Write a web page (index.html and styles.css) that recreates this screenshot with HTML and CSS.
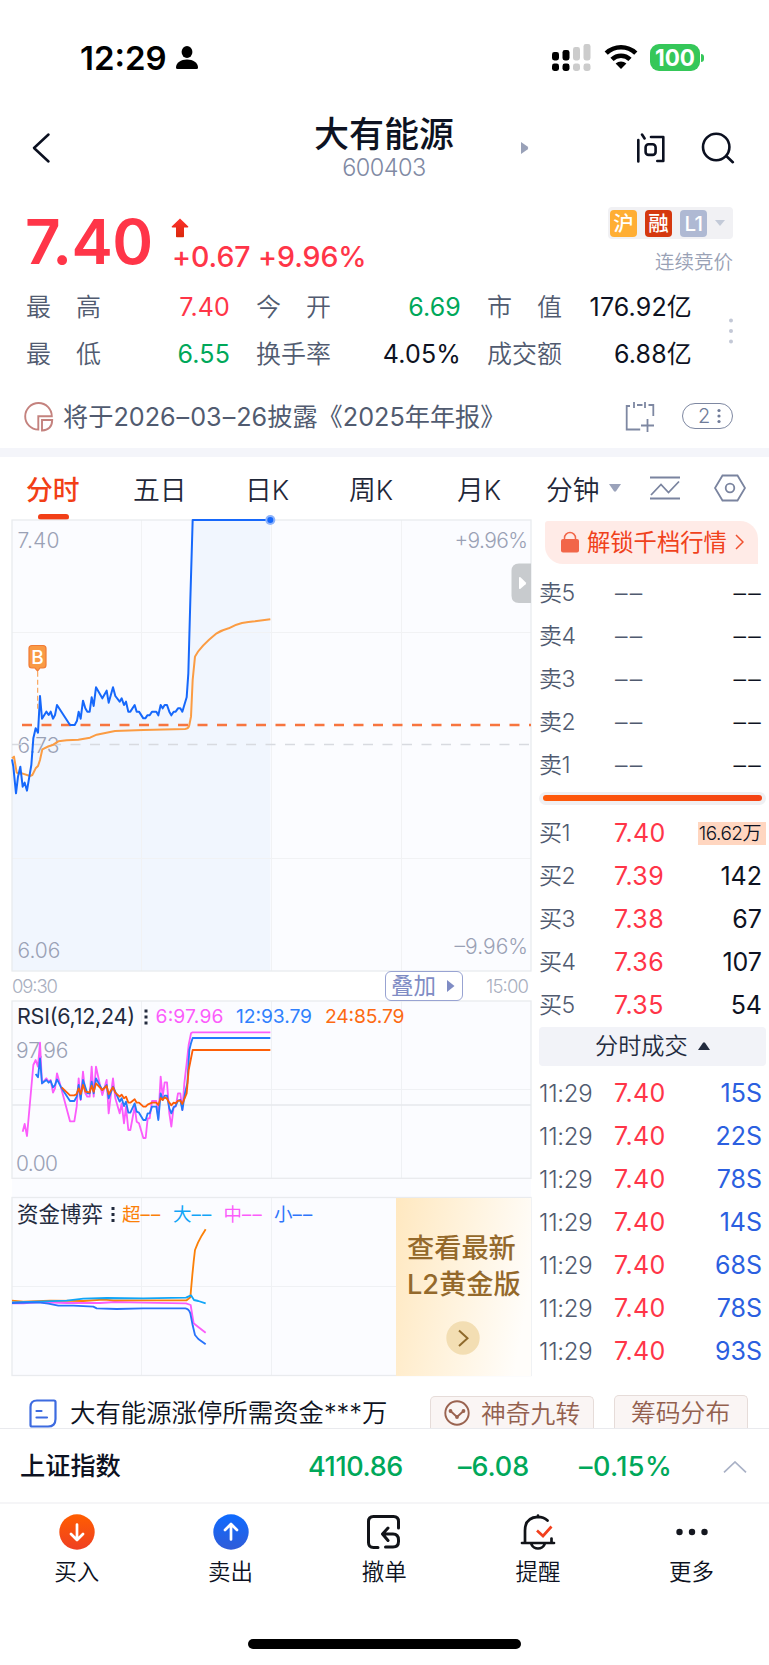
FILE: index.html
```html
<!DOCTYPE html>
<html lang="zh-CN">
<head>
<meta charset="utf-8">
<title>大有能源 600403</title>
<link rel="stylesheet" href="styles.css">
</head>
<body>
<div class="status">
  <span class="clock">12:29</span>
  <svg class="person" width="24" height="26" viewBox="0 0 24 26"><ellipse cx="12" cy="7" rx="5.4" ry="6"/><path d="M1 22.5C1 17.5 6 14.5 12 14.5s11 3 11 8q0 1.5-1.5 1.5h-19Q1 24 1 22.5Z"/></svg>
  <svg class="signal" width="39" height="28" viewBox="0 0 39 28"><g fill="#000"><rect x="0" y="8" width="7" height="8.5" rx="2.4"/><rect x="0" y="19.5" width="7" height="7.5" rx="2.4"/><rect x="10.5" y="6" width="7" height="10.5" rx="2.4"/><rect x="10.5" y="19.5" width="7" height="7.5" rx="2.4"/></g><g fill="#ccc"><rect x="21" y="3" width="7" height="13.5" rx="2.4"/><rect x="21" y="19.5" width="7" height="7.5" rx="2.4"/><rect x="31.5" y="0" width="7" height="16.5" rx="2.4"/><rect x="31.5" y="19.5" width="7" height="7.5" rx="2.4"/></g></svg>
  <svg class="wifi" width="34" height="26" viewBox="0 0 34 26"><path d="M2.2 9.2a21.5 21.5 0 0 1 29.6 0M8 15.4a13 13 0 0 1 18 0" fill="none" stroke="#000" stroke-width="4.6"/><path d="M11.6 19.6a8 8 0 0 1 10.8 0L17 25Z"/></svg>
  <span class="battery">100</span><i class="nub"></i>
</div>

<header class="header">
  <svg class="back" width="20" height="32" viewBox="0 0 20 32"><path d="M17.5 2.5 3 16l14.500 13.5" fill="none" stroke="#0b1020" stroke-width="2.5" stroke-linecap="round" stroke-linejoin="round"/></svg>
  <div class="title"><h1>大有能源</h1><span>600403</span></div>
  <svg class="next" width="8" height="12" viewBox="0 0 8 12"><path d="M0 0 6.5 4.5q1.5 1.5 0 3L0 12Z" fill="#99a1b8"/></svg>
  <svg class="ask" width="30" height="32" viewBox="0 0 30 32"><g fill="none" stroke="#0b1020" stroke-width="2.6" stroke-linecap="round" stroke-linejoin="round"><path d="M2.3 8v21.5M6 2.5l2.6 4M15 5h12.3v24h-6"/><rect x="9.6" y="12.3" width="10" height="10.6" rx="3"/></g></svg>
  <svg class="search" width="34" height="32" viewBox="0 0 34 32"><g fill="none" stroke="#0b1020" stroke-width="2.6" stroke-linecap="round"><circle cx="15.2" cy="15" r="13.2"/><path d="m25.3 24 6.5 6.2"/></g></svg>
</header>

<section class="quote">
  <strong class="price">7.40</strong>
  <div class="change">
    <svg width="18" height="21" viewBox="0 0 18 21"><defs><linearGradient id="up" x2="0" y2="1"><stop stop-color="#ff302c"/><stop offset="1" stop-color="#d9280b"/></linearGradient></defs><path d="M9 .5 17.3 8.5q.3 1-.8 1H13V18.500q0 .8-.8.8H5.8q-.8 0-.8-.8V9.500H1.500q-1.100 0-.8-1Z" fill="url(#up)"/></svg>
    <span>+0.67 +9.96%</span>
  </div>
  <div class="market">
    <div class="badges"><b class="hu">沪</b><b class="rong">融</b><b class="l1">L1</b><i class="tri-down"></i></div>
    <span>连续竞价</span>
  </div>
</section>

<section class="stats">
  <span class="lab wide"><i>最</i><i>高</i></span><span class="val up">7.40</span>
  <span class="lab wide"><i>今</i><i>开</i></span><span class="val down">6.69</span>
  <span class="lab wide"><i>市</i><i>值</i></span><span class="val">176.92亿</span>
  <svg class="more" width="6" height="28" viewBox="0 0 6 28"><g fill="#c3c8d6"><circle cx="3" cy="3.500" r="2"/><circle cx="3" cy="14" r="2"/><circle cx="3" cy="24.500" r="2"/></g></svg>
  <span class="lab wide"><i>最</i><i>低</i></span><span class="val down">6.55</span>
  <span class="lab">换手率</span><span class="val">4.05%</span>
  <span class="lab">成交额</span><span class="val">6.88亿</span>
</section>

<section class="notice">
  <svg width="30" height="30" viewBox="0 0 30 30"><g fill="none" stroke="#c4827e" stroke-width="1.900"><path d="M14.300 27.600A13.300 13.300 0 1 1 27.800 14.300H14.300Z"/><path d="M18 18h10.200q-.2 10-10.200 10.500Z"/></g></svg>
  <span class="news">将于2026<em>–</em>03<em>–</em>26披露《2025年年报》</span>
  <svg width="30" height="30" viewBox="0 0 30 30"><path d="M5 4H1.700v23.500h13.500M9 0v6M20 0v6M12 3h5.500M23.500 3h4.800v11M16 23.500h13M22.500 17v13" fill="none" stroke="#7e88a2" stroke-width="1.800"/></svg>
  <span class="pill">2<svg width="4" height="16" viewBox="0 0 4 16"><g fill="#6f7b99"><circle cx="2" cy="2.500" r="1.600"/><circle cx="2" cy="8" r="1.600"/><circle cx="2" cy="13.500" r="1.600"/></g></svg></span>
</section>

<nav class="tabs">
  <span class="on">分时</span><span>五日</span><span>日K</span><span>周K</span><span>月K</span><span>分钟</span>
  <svg class="t-tri" width="12" height="8" viewBox="0 0 12 8"><path d="M0 0h12L7 7.300q-1 .9-2 0Z" fill="#9aa2ba"/></svg>
  <svg class="t-line" width="30" height="24" viewBox="0 0 30 24"><path d="M0 1.500h30M0 22.500h30M1 19 11 8.500l7.500 8L29 5.500" fill="none" stroke="#7a849f" stroke-width="1.800"/></svg>
  <svg class="t-hex" width="32" height="28" viewBox="0 0 32 28"><g fill="none" stroke="#7a849f" stroke-width="1.800"><path d="M8.500 1.500h15L31 14l-7.500 12.500h-15L1 14Z"/><circle cx="16" cy="14" r="4.300"/></g></svg>
</nav>

<main class="main">
  <div class="charts">
    <svg class="plot" width="534" height="482" viewBox="0 515 534 482">
      <rect x="12" y="520" width="519" height="451" fill="#fbfcff"/>
      <g transform="translate(0 450) scale(.33333)">
        <path fill="#f1f6fe" d="M36 928 40 950 48 1030 54 980 61 950 68 1010 74 998 81 1022 88 980 94 945 100 865 107 835 114 848 120 738 126 806 139 785 146 795 152 785 159 806 165 795 171 765 210 825 224 825 231 812 236 785 242 806 249 752 262 785 269 785 275 742 281 768 288 712 307 745 320 722 326 758 339 712 346 738 359 755 365 745 372 765 378 755 385 785 391 785 404 765 410 785 417 785 430 805 436 805 456 785 469 785 475 796 482 765 488 775 501 765 514 796 534 775 547 785 560 742 565 670 571 450 578 210 811 210V1562H36Z"/>
      </g>
      <g fill="none" stroke="#f1f2f4" stroke-width="1"><path d="M141.500 520v451M271.500 520v451M401.500 520v451M12 632.500h519M12 858.500h519"/></g>
      <rect x="12" y="520" width="519" height="451" fill="none" stroke="#e9ebee" stroke-width="1.300"/>
      <g class="axis"><text x="17.500" y="548" textLength="42">7.40</text><text x="17.500" y="753" textLength="42">6.73</text><text x="17.500" y="958" textLength="43">6.06</text><text x="454.500" y="548" textLength="73.500">+9.96%</text><text x="454.500" y="954" textLength="73.500">–9.96%</text></g>
      <path d="M12 744.500h519" stroke="#d8dae0" stroke-width="1.700" stroke-dasharray="10 9.500"/>
      <path d="M22 725h509" stroke="#f7753f" stroke-width="2.300" stroke-dasharray="10 9.500"/>
      <g transform="translate(0 450) scale(.33333)" fill="none" stroke-linejoin="round" stroke-width="6">
        <path stroke="#fb9c43" d="M36 925 42 920 50 968Q58 972 66 970L90 978 97 975 107 955 114 948 120 930 127 898Q145 888 160 884L175 874 200 871 235 869 270 863 290 854 345 843 430 840 555 837Q566 836 568 825L573 800 578 690 585 620Q600 590 650 550 665 541 686 535 705 524 726 519 745 516 765 514L811 508"/>
        <path stroke="#1668fb" d="M36 928 40 950 48 1030 54 980 61 950 68 1010 74 998 81 1022 88 980 94 945 100 865 107 835 114 848 120 738 126 806 139 785 146 795 152 785 159 806 165 795 171 765 210 825 224 825 231 812 236 785 242 806 249 752 256 775 262 785 269 785 275 742 281 768 288 712 307 745 320 722 326 758 339 712 346 738 359 755 365 745 372 765 378 755 385 785 391 785 404 765 410 785 417 785 430 805 436 805 442 796 449 796 456 785 469 785 475 796 482 765 488 775 494 765 501 765 508 785 514 796 521 785 527 785 534 775 541 775 547 785 553 765 560 742 565 670 571 450 578 210H811"/>
        <path d="M113 665V780" stroke="#f9a45a" stroke-width="3.500" stroke-dasharray="15 9"/>
      </g>
      <circle cx="270.300" cy="520" r="5" fill="#8db3fb"/><circle cx="270.300" cy="520" r="3" fill="#1668fb"/>
      <path d="M32 645.500h11q3 0 3 3v16.500q0 3-3 3h-3L37.600 671 35 668h-3q-3 0-3-3V648.500q0-3 3-3Z" fill="#f99a45" stroke="#f17b36" stroke-width="1.200"/>
      <text class="mark" x="31.200" y="664" textLength="13">B</text>
      <path d="M531 563.500h-12q-7.500 0-7.500 7.500v24.500q0 7.500 7.500 7.500h12Z" fill="#c8cbce"/><path d="M519 578v10q0 1.500 1.500.7l5.100-4.400q1-1 0-2l-5.100-5q-1.500-.8-1.500.7Z" fill="#fff"/>
      <text class="time" x="12" y="992.500" textLength="46">09:30</text><text class="time" x="486" y="992.500" textLength="43">15:00</text>
    </svg>
    <button class="overlay">叠加<svg width="8" height="12" viewBox="0 0 8 12"><path d="M0 0 7.500 6 0 12Z" fill="#7f8cc4"/></svg></button>
    <svg class="plot" width="534" height="385" viewBox="0 997 534 385">
      <path d="M12 1001h519v375H12Z" fill="#fbfcff"/>
      <g fill="none" stroke="#eff1f4" stroke-width="1"><path d="M141.500 1001v177M271.500 1001v177M401.500 1001v177M141.500 1197v179M271.500 1197v179M12 1089.500h519M12 1286.500h384"/></g>
      <path d="M12 1105h519" stroke="#e6e8ec" stroke-width="1.500"/>
      <g fill="none" stroke="#e9ebee" stroke-width="1.300"><rect x="12" y="1001" width="519" height="177.300"/><rect x="12" y="1197.500" width="519" height="178"/></g>
      <text class="name" x="17" y="1024" textLength="118">RSI(6,12,24)</text>
      <g fill="#232b3e"><rect x="144.500" y="1009.500" width="3" height="3"/><rect x="144.500" y="1015.500" width="3" height="3"/><rect x="144.500" y="1021.500" width="3" height="3"/></g>
      <g class="series"><text x="155.500" y="1023.300" textLength="68" fill="#fb5cfb">6:97.96</text><text x="236" y="1023.300" textLength="76" fill="#2f80fd">12:93.79</text><text x="325" y="1023.300" textLength="79.500" fill="#fd6a12">24:85.79</text></g>
      <g class="axis"><text x="16" y="1058" textLength="52.500">97.96</text><text x="16" y="1171" textLength="42">0.00</text></g>
      <g transform="translate(0 950) scale(.33333)" fill="none" stroke-width="5.500" stroke-linejoin="round">
        <path stroke="#fb5cfb" d="M68 545 74 522 81 558 100 345 107 330 114 350 120 278 126 400 139 385 146 395 152 390 159 428 165 415 171 370 185 420 210 514 223 514 230 470 236 385 242 450 249 365 256 430 262 440 269 440 275 350 281 440 288 350 300 405 307 435 320 390 326 490 333 430 339 385 346 445 359 490 365 460 372 520 378 470 385 540 391 540 404 470 410 515 417 520 430 564 437 564 443 505 449 505 456 453 469 453 475 505 482 380 488 440 494 397 501 397 508 490 514 530 521 470 527 470 534 430 541 430 547 480 553 400 560 340 566 285 573 250 578 247H811"/>
        <path stroke="#2379fb" d="M107 372 114 382 120 325 126 400 139 390 146 398 152 393 159 412 165 405 171 388 185 415 210 453 223 453 230 440 236 405 242 448 249 390 262 430 269 430 275 395 281 430 288 385 307 420 320 405 326 445 339 410 359 455 365 445 372 468 378 455 385 488 391 488 404 460 410 485 417 488 430 510 437 510 443 490 449 490 456 470 469 470 475 510 482 430 488 450 494 437 501 437 508 475 514 490 521 472 527 468 534 452 541 450 547 480 555 430 562 400 568 300 573 280 578 264H811"/>
        <path stroke="#fd5f08" d="M185 412 210 436 223 436 230 432 236 415 242 432 249 405 256 425 269 427 275 407 281 425 288 400 307 420 320 408 326 432 339 412 346 428 359 440 365 434 372 445 378 440 385 458 391 458 404 448 410 458 417 458 430 470 437 470 443 464 456 458 469 458 475 465 482 444 488 450 494 442 501 446 508 458 514 466 521 458 527 460 534 452 541 452 547 462 560 430 566 360 578 300H811"/>
      </g>
      <text class="name" x="17" y="1221.500" textLength="86">资金博弈</text>
      <g fill="#232b3e"><rect x="111.500" y="1207" width="3" height="3"/><rect x="111.500" y="1213" width="3" height="3"/><rect x="111.500" y="1219" width="3" height="3"/></g>
      <g class="series fund"><text x="122" y="1220.500" fill="#fb8008">超<tspan>––</tspan></text><text x="173" y="1220.500" fill="#10a5f7">大<tspan>––</tspan></text><text x="223.500" y="1220.500" fill="#fb5cfb">中<tspan>––</tspan></text><text x="274" y="1220.500" fill="#2f75fb">小<tspan>––</tspan></text></g>
      <g transform="translate(0 1180) scale(.33333)" fill="none" stroke-width="5.500" stroke-linejoin="round">
        <path stroke="#fb5cfb" d="M36 370 70 370 120 366 200 369 300 369 345 366 430 368 558 370 572 375 576 400 581 430 590 437 617 458"/>
        <path stroke="#fb8008" d="M36 362 70 365 150 362 250 363 310 359 340 361 560 361 571 352 577 285 581 245 585 210 594 188 605 167 617 148"/>
        <path stroke="#10a5f7" d="M36 367 110 365 200 362 250 356 320 354 430 355 558 353 573 346 582 360 595 363 617 370"/>
        <path stroke="#2873fb" d="M36 369 115 367 145 371 175 377 220 377 280 380 290 385 350 387 430 385 556 385Q566 386 571 400L578 436 585 465 595 477 617 493"/>
      </g>
    </svg>
    <div class="gold"><p>查看最新<br>L2黄金版</p><svg width="34" height="34" viewBox="0 0 34 34"><circle cx="17" cy="17" r="16.700" fill="#f3deb3"/><path d="m13 9.500 8.500 7.800L13 25" fill="none" stroke="#8f6a2c" stroke-width="2"/></svg></div>
  </div>

  <aside class="book">
    <div class="unlock"><svg width="18" height="22" viewBox="0 0 18 22"><path d="M3.500 9V7a5.500 5.500 0 0 1 11 0v2" fill="none" stroke="#f26648" stroke-width="1.500"/><rect x="0" y="8" width="18" height="13.500" rx="2" fill="#f26648"/></svg><span>解锁千档行情</span><svg width="9" height="16" viewBox="0 0 9 16"><path d="m1 1 7 7-7 7" fill="none" stroke="#f0502f" stroke-width="1.500"/></svg></div>
    <div class="rows sell">
      <div><span>卖5</span><i>––</i><b>––</b></div>
      <div><span>卖4</span><i>––</i><b>––</b></div>
      <div><span>卖3</span><i>––</i><b>––</b></div>
      <div><span>卖2</span><i>––</i><b>––</b></div>
      <div><span>卖1</span><i>––</i><b>––</b></div>
    </div>
    <div class="ratio"><i></i></div>
    <div class="rows">
      <div><span>买1</span><i>7.40</i><b class="hot">16.62万</b></div>
      <div><span>买2</span><i>7.39</i><b>142</b></div>
      <div><span>买3</span><i>7.38</i><b>67</b></div>
      <div><span>买4</span><i>7.36</i><b>107</b></div>
      <div><span>买5</span><i>7.35</i><b>54</b></div>
    </div>
    <div class="deal">分时成交<svg width="12" height="8" viewBox="0 0 12 8"><path d="M0 8 5 .7q1-1 2 0L12 8Z" fill="#232b3e"/></svg></div>
    <div class="rows ticks">
      <div><span>11:29</span><i>7.40</i><b>15S</b></div>
      <div><span>11:29</span><i>7.40</i><b>22S</b></div>
      <div><span>11:29</span><i>7.40</i><b>78S</b></div>
      <div><span>11:29</span><i>7.40</i><b>14S</b></div>
      <div><span>11:29</span><i>7.40</i><b>68S</b></div>
      <div><span>11:29</span><i>7.40</i><b>78S</b></div>
      <div><span>11:29</span><i>7.40</i><b>93S</b></div>
    </div>
  </aside>
</main>

<section class="hints">
  <svg class="doc" width="28" height="29" viewBox="0 0 28 29"><g fill="none" stroke="#3d6be0" stroke-width="2.200" stroke-linecap="round"><path d="M8 1.500h17q1.500 0 1.500 1.500v17q0 7.500-7.500 7.500H3q-1.500 0-1.500-1.500V8Q1.500 1.500 8 1.500Z"/><path d="M7.500 12h5M7.500 18.500h10.500"/></g></svg>
  <span class="hint">大有能源涨停所需资金***万</span>
  <span class="tag one"><svg width="26" height="26" viewBox="0 0 26 26"><g fill="none" stroke="#9a6350" stroke-width="1.900"><circle cx="13" cy="13" r="11.700"/><path d="m6.500 11 6.500 6 6.500-6" stroke-linecap="round"/></g><g fill="#9a6350"><circle cx="6.500" cy="11" r="1.900"/><circle cx="13" cy="17" r="1.900"/><circle cx="19.500" cy="11" r="1.900"/></g></svg>神奇九转</span>
  <span class="tag two">筹码分布</span>
</section>

<section class="index">
  <b>上证指数</b><span class="i1">4110.86</span><span class="i2">–6.08</span><span class="i3">–0.15%</span>
  <svg width="24" height="12" viewBox="0 0 24 12"><path d="M1 11.300 12 1l11 10.300" fill="none" stroke="#a9b1c6" stroke-width="1.700"/></svg>
</section>

<footer class="nav">
  <div><svg width="36" height="36" viewBox="0 0 36 36"><defs><linearGradient id="buy" x2="0" y2="1"><stop stop-color="#ff5e00"/><stop offset="1" stop-color="#ef3f22"/></linearGradient></defs><circle cx="18" cy="18" r="17.700" fill="url(#buy)"/><path d="M18 10.500v15M12 20l6 6 6-6" fill="none" stroke="#fff" stroke-width="2.700" stroke-linecap="round" stroke-linejoin="round"/></svg>买入</div>
  <div><svg width="36" height="36" viewBox="0 0 36 36"><defs><linearGradient id="sell" x2="0" y2="1"><stop stop-color="#0e6bff"/><stop offset="1" stop-color="#305cd8"/></linearGradient></defs><circle cx="18" cy="18" r="17.700" fill="url(#sell)"/><path d="M18 25.500v-15M12 16l6-6 6 6" fill="none" stroke="#fff" stroke-width="2.700" stroke-linecap="round" stroke-linejoin="round"/></svg>卖出</div>
  <div><svg width="36" height="36" viewBox="0 0 36 36"><path d="M12 33.500H7.500q-5 0-5-5V7.500q0-5 5-5h20q5 0 5 5v6.500M22 14 16.500 20l5.500 6.500M17 20h10q5.500 0 5.500 6v1.500q0 5.500-5.500 5.500h-7.500" fill="none" stroke="#111318" stroke-width="3" stroke-linecap="round" stroke-linejoin="round"/></svg>撤单</div>
  <div><svg width="36" height="36" viewBox="0 0 36 36"><path d="M27.500 6.500Q23.500 2.900 18 2.900 5 3.500 5 16.500V28M18 2.500V1.500M2 29h32M31.500 28v-3.500M11.500 30.500q2 4 6.500 4t6.500-4" fill="none" stroke="#111318" stroke-width="2.700" stroke-linecap="round"/><path d="m17 16.500 6 5.500 8.500-9.500" fill="none" stroke="#f2401d" stroke-width="2.700"/></svg>提醒</div>
  <div><svg width="36" height="36" viewBox="0 0 36 36"><g fill="#14171f"><circle cx="5.500" cy="18" r="3.200"/><circle cx="18" cy="18" r="3.200"/><circle cx="30.500" cy="18" r="3.200"/></g></svg>更多</div>
</footer>
<div class="home"></div>
</body>
</html>
```
FILE: styles.css
```css
* { box-sizing: border-box; }
body {
  margin: 0;
  width: 769px;
  height: 1665px;
  overflow: hidden;
  background: #fff;
  color: #0d1222;
  font-family: Inter, "Noto Sans CJK SC", sans-serif;
  font-weight: 360;
}
svg { display: block; flex: none; }
i, em { font-style: normal; }
span, b { white-space: nowrap; }

.status { display: flex; height: 104px; padding: 0 64px 0 80px; align-items: flex-start; }
.clock { width: 89px; margin-top: 38px; font-size: 33px; line-height: 40px; font-weight: 590; letter-spacing: 0; color: #000; }
.person { margin: 45px 0 0 6px; }
.signal { margin: 44px 0 0 353px; }
.wifi { margin: 44px 0 0 13px; }
.battery { flex: none; width: 50px; height: 27px; margin: 44px 0 0 12px; border-radius: 9px; background: #35c759; color: #fff; font-size: 22.500px; line-height: 27px; font-weight: 700; text-align: center; }
.nub { flex: none; width: 3px; height: 8px; margin: 54px 0 0 1px; border-radius: 0 4px 4px 0; background: #35c759; }
.status svg, .clock { flex: none; }

.header { display: flex; height: 93px; padding-left: 31px; }
.back { margin-top: 28px; }
.title { width: 200px; margin-left: 233px; text-align: center; }
.title h1 { margin: 6px 0 0; font-size: 35px; line-height: 48px; font-weight: 500; }
.title span { display: block; font-size: 23.5px; line-height: 24px; letter-spacing: -.5px; color: #8089a3; margin-top: -2px; }
.next { margin: 38px 0 0 37px; }
.ask { margin: 28px 0 0 107px; }
.search { margin: 28px 0 0 35px; }

.quote { display: flex; height: 87px; padding-left: 25px; }
.price { width: 146px; font-size: 62px; line-height: 89px; font-weight: 560; letter-spacing: -.6px; color: #ff3548; }
.change { width: 437px; padding-top: 21px; color: #ff3548; }
.change span { display: block; font-size: 28.500px; line-height: 34px; margin-top: 1px; margin-left: 1px; font-weight: 530; letter-spacing: -.05px; }
.market span { display: block; margin-top: 9px; font-size: 19.500px; line-height: 28px; text-align: right; color: #99a1b5; }
.badges { display: flex; width: 125px; height: 32px; margin-top: 10px; padding: 0 2px; gap: 8px; align-items: center; border-radius: 4px; background: #f1f1f4; }
.badges b { width: 27px; height: 27px; border-radius: 4px; color: #fff; font-size: 20.500px; line-height: 27px; font-weight: 500; text-align: center; }
.hu { background: #ffae34; }
.rong { background: #d5380f; }
.l1 { background: #afb9d3; letter-spacing: -.6px; }
.tri-down { border: 5.500px solid transparent; border-top: 6px solid #c3cad8; border-bottom: 0; }

.stats { display: grid; grid-template-columns: 75px 129px 101px 130px 101px 130px 1fr; grid-auto-rows: 47px; height: 98px; padding: 0 0 0 26px; font-size: 25px; line-height: 47px; }
.lab { width: 75px; justify-self: end; color: #515b70; }
.wide { display: flex; justify-content: space-between; }
.val { text-align: right; font-weight: 385; letter-spacing: .15px; }
.up { color: #ff3548; }
.down { color: #00a85a; }
.more { grid-row: span 2; align-self: start; margin: 33px 0 0 36px; }

.notice { display: flex; height: 66px; padding: 20px 36px 0 24px; align-items: flex-start; }
.news { width: 563px; margin-left: 9px; font-size: 25.200px; line-height: 30px; font-weight: 385; color: #515b70; }
.news em { margin: 0 1px; }
.pill { display: flex; width: 51px; height: 26px; margin: 1px 0 0 27px; padding-left: 15px; gap: 7px; align-items: center; border: 1.500px solid #7e88a2; border-radius: 13px; color: #6f7b99; font-size: 20px; line-height: 23px; }

.tabs { display: grid; grid-template-columns: 107px 112px 104px 108px 89px 54px 34px 45px 36px; height: 67px; padding: 0 0 0 26px; border-top: 9px solid #f4f5fa; color: #1f2738; font-size: 26.800px; line-height: 66px; }
.tabs span { position: relative; }
.on { color: #f23f17; font-weight: 500; }
.on::after { content: ""; position: absolute; left: 12px; top: 57px; width: 31px; height: 5.500px; border-radius: 3px; background: #f23f17; }
.t-tri { margin: 27px 0 0 9px; }
.t-line { margin: 19px 0 0 16px; }
.t-hex { margin: 17px 0 0 35px; }

.main { display: flex; height: 867px; }
.charts { position: relative; width: 534px; }
.axis text { font-size: 21px; fill: #9aa1b5; }
.time { font-size: 18.500px; fill: #a9afc0; }
.mark { font-size: 19px; font-weight: 500; fill: #fff; }
.name { font-size: 21.500px; font-weight: 385; fill: #232b3e; }
.series text { font-size: 19.300px; font-weight: 385; }
.series.fund text { font-size: 18.500px; }
.fund tspan { letter-spacing: 1.300px; }
.overlay { position: absolute; left: 385px; top: 456px; width: 78px; height: 30px; display: flex; padding: 0 0 0 5px; gap: 11px; align-items: center; border: 1.500px solid #98a3d2; border-radius: 6px; background: #fff; color: #7f8cc4; font: 400 22.500px/26px Inter, "Noto Sans CJK SC", sans-serif; }
.gold { position: absolute; left: 396px; top: 683px; width: 135px; height: 177.500px; padding: 33px 0 0 11px; background: linear-gradient(100deg, #ffe8c0, #fff4e0 50%, #fffdfa 90%); color: #94692b; }
.gold p { margin: 0; font-size: 27.200px; line-height: 36px; font-weight: 450; white-space: nowrap; }
.gold svg { margin: 18px 0 0 39px; }

.book { width: 235px; padding: 5.500px 3px 0 4px; }
.unlock { display: flex; width: 213px; height: 43px; margin-left: 7px; padding-left: 16px; align-items: center; border-radius: 3px 18px 0 18px; background: #ffebe7; color: #f0421c; font-size: 23.300px; line-height: 43px; font-weight: 400; }
.unlock span { width: 139px; margin: 0 9px 0 8px; }
.rows > div { display: grid; grid-template-columns: 74px 60px 1fr; height: 43px; padding-left: 2px; align-items: center; line-height: 43px; }
.rows span { margin-left: -1px; font-size: 23px; color: #515b70; letter-spacing: -.5px; }
.rows i { font-size: 25px; font-weight: 385; color: #ff3548; letter-spacing: .4px; }
.rows b { justify-self: end; padding-right: 4px; font-size: 25px; font-weight: 385; letter-spacing: 0; }
.sell { padding-top: 8px; }
.sell i, .sell b { font-weight: 360; letter-spacing: 2.200px; }
.sell b { padding-right: 3px; }
.sell i { color: #515b70; padding-left: 1px; }
.ratio { height: 13px; margin: 5px 0 7px 1px; padding: 3.500px 4px; border-radius: 7px; background: #f0f0f2; }
.ratio i { display: block; height: 6px; border-radius: 3px; background: linear-gradient(90deg, #ff5a0a, #f44314); }
.rows .hot { padding: 0 5px 0 1px; height: 23px; background: #ffd6c0; font-size: 19px; font-weight: 360; line-height: 23px; letter-spacing: -.5px; }
.deal { display: flex; height: 39px; margin: 0 0 6px 1px; padding-left: 56px; gap: 10px; align-items: center; border-radius: 4px; background: #f2f3f8; color: #232b3e; font-size: 23.200px; line-height: 39px; }
.ticks > div { padding-left: 2px; }
.ticks span { font-size: 24px; letter-spacing: -.3px; }
.ticks b { color: #2b5fe0; }

.hints { display: flex; height: 47px; padding-left: 29px; border-bottom: 1px solid #e9eaee; }
.doc { margin-top: 17px; }
.hint { width: 360px; margin-left: 13px; font-size: 25.400px; line-height: 62px; height: 46px; }
.tag { display: flex; border: 1.500px solid #e6dcd9; border-bottom: 0; border-radius: 5px 5px 0 0; background: #faf5f4; color: #93604e; font-size: 24.800px; line-height: 28px; padding-top: 3px; }
.one { width: 164px; height: 32px; margin: 14px 0 0; padding-left: 14px; gap: 11px; }
.one svg { margin: 0 0 0 -1px; }
.two { width: 134px; height: 33px; margin: 13px 0 0 20px; padding-left: 16px; }

.index { display: grid; grid-template-columns: 288px 150px 121px 144px 24px; height: 75px; padding-left: 20px; align-items: center; border-bottom: 2px solid #f5f5f7; color: #00a85a; font-size: 27px; font-weight: 550; line-height: 73px; letter-spacing: -.1px; padding-top: 1px; }
.index .i1 { letter-spacing: -.4px; }
.index .i3 { letter-spacing: .4px; }
.index b { color: #0d1222; font-size: 25.200px; font-weight: 500; letter-spacing: 0; }

.nav { display: grid; grid-template-columns: repeat(5, 153.700px); height: 135px; padding-top: 10px; }
.nav div { display: flex; flex-direction: column; align-items: center; font-size: 22.500px; line-height: 30px; gap: 7px; }
.home { width: 273px; height: 10px; margin: 0 0 0 248px; border-radius: 5px; background: #000; }
```
